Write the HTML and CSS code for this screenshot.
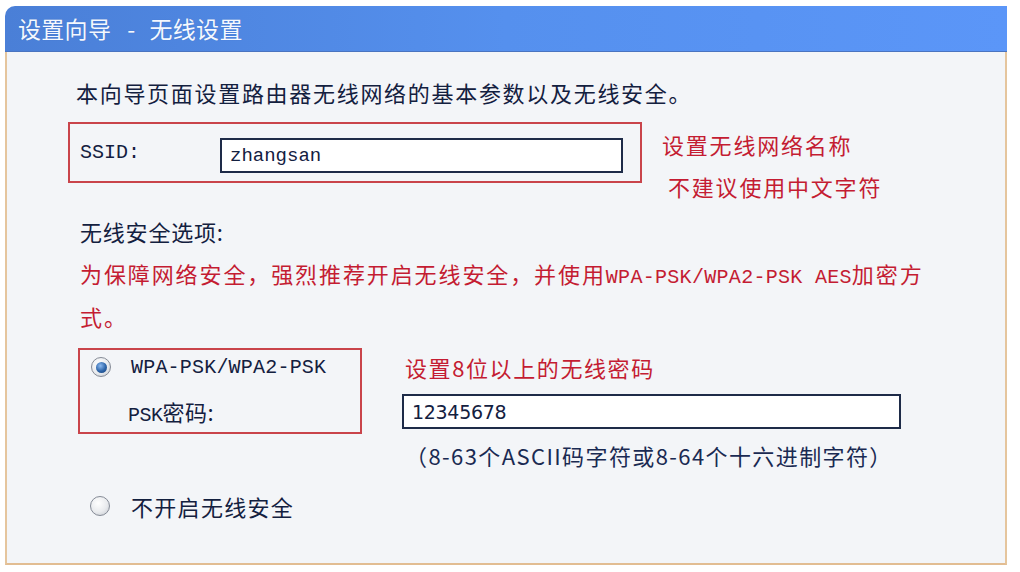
FILE: index.html
```html
<!DOCTYPE html>
<html lang="zh-CN">
<head>
<meta charset="utf-8">
<title>设置向导 - 无线设置</title>
<link rel="stylesheet" href="styles.css">
</head>
<body>
<div class="panel">
  <div class="header"><span>设置向导</span><span class="dash">-</span><span>无线设置</span></div>
  <div class="content">
    <div class="intro">本向导页面设置路由器无线网络的基本参数以及无线安全。</div>
    <div class="row1">
      <div class="box1">
        <span class="mono label-ssid">SSID:</span>
        <div class="input input-ssid"><span class="mono">zhangsan</span></div>
      </div>
      <div class="notes1">
        <div class="note">设置无线网络名称</div>
        <div class="note note-indent">不建议使用中文字符</div>
      </div>
    </div>
    <div class="sec-label">无线安全选项:</div>
    <div class="warn">为保障网络安全，强烈推荐开启无线安全，并使用<span class="mono">WPA-PSK/WPA2-PSK AES</span>加密方<br>式。</div>
    <div class="row2">
      <div class="box2">
        <div class="opt-line">
          <span class="radio checked"></span>
          <span class="mono wpa">WPA-PSK/WPA2-PSK</span>
        </div>
        <div class="psk-line"><span class="mono">PSK</span>密码:</div>
      </div>
      <div class="col2">
        <div class="note">设置8位以上的无线密码</div>
        <div class="input input-psk"><span class="digits">12345678</span></div>
        <div class="help">（8-63个ASCII码字符或8-64个十六进制字符）</div>
      </div>
    </div>
    <div class="opt2">
      <span class="radio"></span>
      <span class="opt2-text">不开启无线安全</span>
    </div>
  </div>
</div>
</body>
</html>
```
FILE: styles.css
```css
* { box-sizing: border-box; }
html, body { margin: 0; padding: 0; }
body {
  background: #ffffff;
  width: 1020px;
  height: 572px;
  overflow: hidden;
  font-family: "Noto Sans CJK SC", "Noto Sans", sans-serif;
  color: #13203f;
}
.panel {
  margin: 6px 0 0 5px;
  width: 1002px;
}
.header {
  height: 46px;
  border-radius: 10px 0 0 0;
  background: linear-gradient(to right, #4a7fd7 0%, #5590ee 50%, #5b96f8 100%);
  border-bottom: 1px solid #4a74c0;
  color: #f4f8ff;
  font-size: 23px;
  line-height: 45px;
  padding-left: 13px;
  letter-spacing: 0.3px;
  text-shadow: 0 0 1px rgba(0,0,0,0.15);
}
.dash { margin: 0 14px 0 16px; }
.content {
  height: 513px;
  background: #f3f5f8;
  border-left: 2px solid #e5c59d;
  border-right: 2px solid #e5c59d;
  border-bottom: 2px solid #e2bd92;
  display: flex;
  flex-direction: column;
  align-items: flex-start;
  font-size: 22px;
  letter-spacing: 1.5px;
}
.mono {
  font-family: "Liberation Mono", "DejaVu Sans Mono", monospace;
  letter-spacing: 0;
}
.intro {
  margin: 25px 0 0 69px;
  line-height: 30px;
  letter-spacing: 1.7px;
}
.row1 {
  margin-top: 15px;
  display: flex;
  align-items: flex-start;
}
.box1 {
  margin-left: 61px;
  width: 574px;
  height: 61px;
  border: 2px solid #c9444b;
  display: flex;
  align-items: flex-start;
  padding-left: 10px;
}
.label-ssid {
  width: 140px;
  font-size: 20px;
  line-height: 57px;
}
.input {
  background: #ffffff;
  border: 2px solid #1e2b48;
  height: 35px;
  display: flex;
  align-items: center;
}
.input-ssid {
  width: 403px;
  margin-top: 14px;
  padding-left: 8px;
}
.input-ssid .mono { font-size: 19px; }
.notes1 {
  margin-left: 20px;
  margin-top: 1px;
}
.note {
  color: #c41c32;
  line-height: 42px;
  font-size: 22px;
  letter-spacing: 1.8px;
}
.note-indent { padding-left: 6px; }
.sec-label {
  margin: 9px 0 0 73px;
  line-height: 30px;
  letter-spacing: 0.8px;
}
.warn {
  margin: 8px 0 0 73px;
  line-height: 39px;
  color: #c41c32;
  letter-spacing: 1.9px;
}
.warn .mono { font-size: 20px; letter-spacing: 0.3px; }
.row2 {
  margin-top: 12px;
  display: flex;
  align-items: flex-start;
}
.box2 {
  margin-left: 71px;
  width: 284px;
  height: 86px;
  border: 2px solid #c9444b;
  padding-left: 11px;
}
.opt-line {
  display: flex;
  align-items: center;
  height: 34px;
}
.radio {
  width: 20px;
  height: 20px;
  border-radius: 50%;
  border: 1px solid #858b96;
  background: radial-gradient(circle at 40% 35%, #ffffff 0%, #e9ebee 55%, #bfc4cc 100%);
  position: relative;
  flex: none;
}
.radio.checked::after {
  content: "";
  position: absolute;
  left: 3.5px;
  top: 3.5px;
  width: 11px;
  height: 11px;
  border-radius: 50%;
  background: radial-gradient(circle at 40% 35%, #8cbaf0 0%, #2d64a8 55%, #163d72 100%);
}
.wpa {
  margin-left: 20px;
  font-size: 20px;
  letter-spacing: 0.2px;
}
.psk-line {
  margin-top: 10px;
  line-height: 34px;
  padding-left: 37px;
  font-size: 22px;
  letter-spacing: 0.5px;
}
.psk-line .mono { font-size: 20px; letter-spacing: -0.5px; }
.col2 {
  margin-left: 40px;
  margin-top: 1px;
}
.col2 .note { line-height: 36px; padding-left: 3px; letter-spacing: 1.6px; }
.input-psk {
  width: 499px;
  margin-top: 9px;
  padding-left: 8px;
}
.digits {
  font-family: "DejaVu Sans", "Liberation Sans", sans-serif;
  font-size: 19px;
  letter-spacing: -0.3px;
}
.help {
  margin-top: 8px;
  line-height: 36px;
  padding-left: 3px;
  font-size: 22px;
  letter-spacing: 1.4px;
  color: #1a2a52;
}
.opt2 {
  margin: 15px 0 0 83px;
  display: flex;
  align-items: center;
  height: 36px;
}
.opt2-text {
  margin-left: 21px;
  letter-spacing: 1.3px;
}
```
